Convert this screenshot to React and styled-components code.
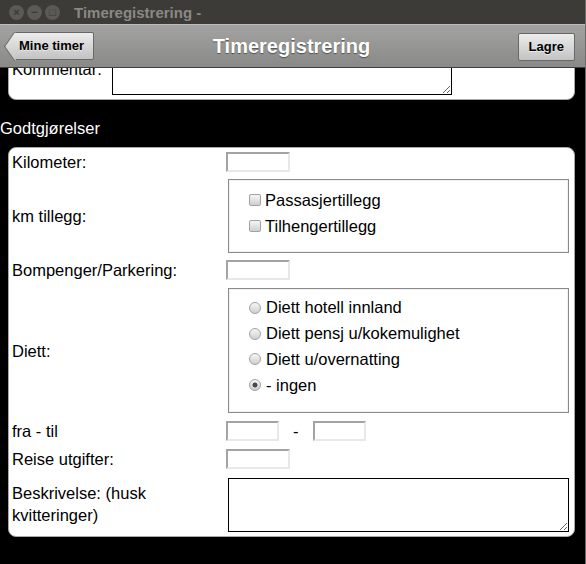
import React from 'react';
import styled, { createGlobalStyle } from 'styled-components';

const GlobalStyle = createGlobalStyle`
  html, body {
    margin: 0;
    padding: 0;
    background: #000;
  }
  body {
    font-family: "Liberation Sans", Arial, sans-serif;
    font-size: 16.5px;
    color: #000;
  }
`;

const Window = styled.div`
  width: 585px;
  height: 564px;
  display: flex;
  flex-direction: column;
  overflow: hidden;
  border-right: 1px solid #6b6b6b;
  background: #000;
`;

const TitleBar = styled.div`
  height: 24px;
  flex: none;
  background: #3c3b37;
  display: flex;
  align-items: center;
  padding-left: 9px;
  gap: 3px;
`;

const WinButton = styled.span`
  width: 15px;
  height: 15px;
  border-radius: 50%;
  background: #5b5a56;
  display: flex;
  align-items: center;
  justify-content: center;
  color: #3a3935;
  font-size: 11px;
  font-weight: bold;
  line-height: 1;
`;

const WindowTitle = styled.span`
  margin-left: 11px;
  font-family: "Liberation Sans", Arial, sans-serif;
  font-weight: bold;
  font-size: 15px;
  color: #8a8984;
`;

const Header = styled.div`
  height: 42px;
  flex: none;
  border-top: 1px solid #bdbdbb;
  border-bottom: 1px solid #3f3f3f;
  background: linear-gradient(#a3a3a1, #898987);
  display: grid;
  grid-template-columns: 1fr auto 1fr;
  align-items: center;
  padding: 0 10px 0 8px;
`;

const HeaderButton = styled.button`
  justify-self: ${({ $end }) => ($end ? 'end' : 'start')};
  position: relative;
  height: 28px;
  margin-left: ${({ $back }) => ($back ? '6px' : '0')};
  padding: ${({ $back }) => ($back ? '0 9px 0 5px' : '0 10px')};
  border: 1px solid #686868;
  border-left: ${({ $back }) => ($back ? 'none' : '1px solid #686868')};
  border-radius: 2px;
  background: linear-gradient(#ececec, #c3c3c3);
  font-family: "Liberation Sans", Arial, sans-serif;
  font-weight: bold;
  font-size: 13px;
  color: #000;
  text-shadow: 0 1px 0 rgba(255, 255, 255, 0.6);
  margin-top: ${({ $back }) => ($back ? '-1px' : '1px')};

  &::before {
    content: '';
    display: ${({ $back }) => ($back ? 'block' : 'none')};
    position: absolute;
    left: -10px;
    top: 3px;
    width: 20px;
    height: 20px;
    border-left: 1px solid #686868;
    border-bottom: 1px solid #686868;
    background: linear-gradient(135deg, #ececec, #c3c3c3);
    transform: scaleX(0.7) rotate(45deg);
  }
`;

const ButtonText = styled.span`
  position: relative;
`;

const HeaderTitle = styled.h1`
  margin: 0;
  font-size: 20px;
  font-weight: bold;
  color: #fff;
  text-shadow: 0 1px 1px rgba(0, 0, 0, 0.45);
`;

const Scroller = styled.div`
  flex: 1;
  overflow: hidden;
`;

const ScrollContent = styled.div`
  margin-top: -30px;
`;

const Card = styled.div`
  margin-left: 8px;
  width: 567px;
  box-sizing: border-box;
  background: #fff;
  border: 1px solid #a8a8a8;
  border-radius: 8px;
  padding: ${({ $pad }) => $pad};
`;

const CommentRow = styled.div`
  display: grid;
  grid-template-columns: 100px 340px;
  align-items: center;
`;

const SectionTitle = styled.h2`
  margin: 18px 0 9px;
  font-size: 16.5px;
  font-weight: normal;
  line-height: 20px;
  color: #fff;
`;

const FormGrid = styled.div`
  display: grid;
  grid-template-columns: 214px 1fr;
  align-items: center;
  row-gap: 6px;
`;

const Label = styled.div`
  line-height: 22px;
`;

const TextInput = styled.input`
  box-sizing: border-box;
  width: ${({ $w }) => $w || 64}px;
  height: 20px;
  margin: 0;
  padding: 1px 2px;
  background: #fff;
  border: 2px solid;
  border-color: #a3a3a3 #e8e8e8 #e8e8e8 #a3a3a3;
  font: inherit;
  font-size: 13px;
`;

const RangeRow = styled.div`
  display: flex;
  align-items: center;
  gap: 14px;
`;

const TextArea = styled.textarea`
  box-sizing: border-box;
  display: block;
  width: ${({ $w }) => ($w ? `${$w}px` : 'auto')};
  height: ${({ $h }) => $h}px;
  margin: ${({ $m }) => $m || 0};
  border: 1px solid #000;
  border-radius: 0;
  background: #fff;
  font: inherit;
  resize: both;
`;

const Fieldset = styled.fieldset`
  box-sizing: border-box;
  height: ${({ $h }) => $h}px;
  margin: ${({ $mt }) => $mt || 0}px 5px ${({ $mb }) => $mb || 0}px 2px;
  padding: ${({ $pt }) => $pt}px 10px 0 20px;
  border: 1px solid #8a8a8a;
  box-shadow: inset 0 0 0 1px #f2f2f2;
  min-width: 0;
`;

const Option = styled.label`
  display: flex;
  align-items: center;
  height: ${({ $lh }) => $lh}px;
`;

const Check = styled.input`
  appearance: none;
  -webkit-appearance: none;
  box-sizing: border-box;
  width: 12px;
  height: 12px;
  margin: 0 ${({ $gap }) => $gap}px 0 0;
  border: 1px solid #a2a2a2;
  border-radius: ${({ type }) => (type === 'radio' ? '50%' : '2px')};
  background: linear-gradient(#f6f6f6, #cfcfcf);
  flex: none;

  &:checked {
    background:
      radial-gradient(circle, #4a4a4a 0 2.2px, transparent 2.8px),
      linear-gradient(#f6f6f6, #cfcfcf);
  }
`;

const extras = ['Passasjertillegg', 'Tilhengertillegg'];
const diets = [
  'Diett hotell innland',
  'Diett pensj u/kokemulighet',
  'Diett u/overnatting',
  '- ingen',
];

export default function App() {
  return (
    <Window>
      <GlobalStyle />
      <TitleBar>
        <WinButton>×</WinButton>
        <WinButton>−</WinButton>
        <WinButton>□</WinButton>
        <WindowTitle>Timeregistrering -</WindowTitle>
      </TitleBar>

      <Header>
        <HeaderButton $back>
          <ButtonText>Mine timer</ButtonText>
        </HeaderButton>
        <HeaderTitle>Timeregistrering</HeaderTitle>
        <HeaderButton $end>Lagre</HeaderButton>
      </Header>

      <Scroller>
        <ScrollContent>
          <Card $pad="3px 6px 4px 3px">
            <CommentRow>
              <Label>Kommentar:</Label>
              <TextArea $w={340} $h={53} />
            </CommentRow>
          </Card>

          <SectionTitle>Godtgjørelser</SectionTitle>

          <Card $pad="3px 0 4px 3px">
            <FormGrid>
              <Label>Kilometer:</Label>
              <TextInput />

              <Label>km tillegg:</Label>
              <Fieldset $h={74} $pt={7}>
                {extras.map((name) => (
                  <Option key={name} $lh={26}>
                    <Check type="checkbox" $gap={4} />
                    {name}
                  </Option>
                ))}
              </Fieldset>

              <Label>Bompenger/Parkering:</Label>
              <TextInput />

              <Label>Diett:</Label>
              <Fieldset $h={125} $pt={6} $mt={1} $mb={1}>
                {diets.map((name) => (
                  <Option key={name} $lh={25.75}>
                    <Check
                      type="radio"
                      name="diett"
                      $gap={5}
                      defaultChecked={name === '- ingen'}
                    />
                    {name}
                  </Option>
                ))}
              </Fieldset>

              <Label>fra - til</Label>
              <RangeRow>
                <TextInput $w={53} />
                <span>-</span>
                <TextInput $w={53} />
              </RangeRow>

              <Label>Reise utgifter:</Label>
              <TextInput />

              <Label>
                Beskrivelse: (husk
                <br />
                kvitteringer)
              </Label>
              <TextArea $h={54} $m="2px 5px 0 2px" />
            </FormGrid>
          </Card>
        </ScrollContent>
      </Scroller>
    </Window>
  );
}
